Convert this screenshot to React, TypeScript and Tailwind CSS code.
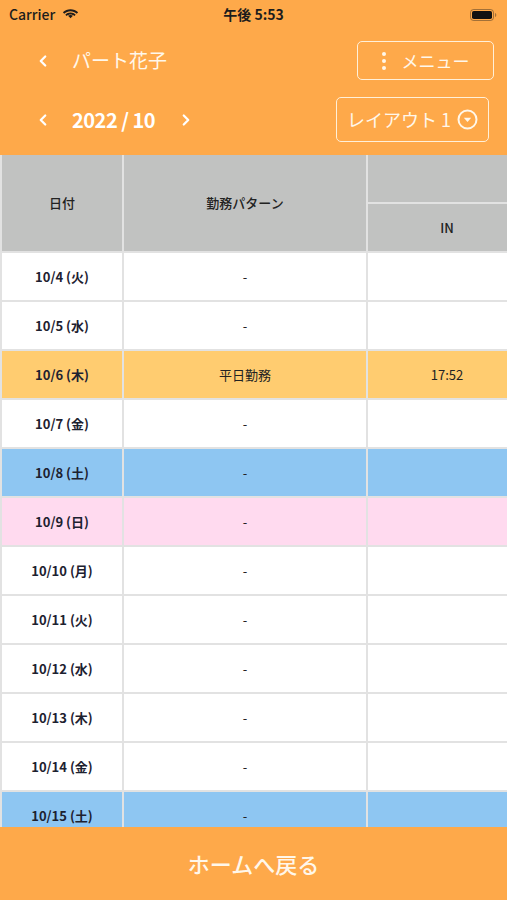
import { ChevronLeft, ChevronRight } from "lucide-react";

type Row = { date: string; pattern: string; inTime: string; tone: "plain" | "work" | "sat" | "sun" };

const rows: Row[] = [
  { date: "10/4 (火)", pattern: "-", inTime: "", tone: "plain" },
  { date: "10/5 (水)", pattern: "-", inTime: "", tone: "plain" },
  { date: "10/6 (木)", pattern: "平日勤務", inTime: "17:52", tone: "work" },
  { date: "10/7 (金)", pattern: "-", inTime: "", tone: "plain" },
  { date: "10/8 (土)", pattern: "-", inTime: "", tone: "sat" },
  { date: "10/9 (日)", pattern: "-", inTime: "", tone: "sun" },
  { date: "10/10 (月)", pattern: "-", inTime: "", tone: "plain" },
  { date: "10/11 (火)", pattern: "-", inTime: "", tone: "plain" },
  { date: "10/12 (水)", pattern: "-", inTime: "", tone: "plain" },
  { date: "10/13 (木)", pattern: "-", inTime: "", tone: "plain" },
  { date: "10/14 (金)", pattern: "-", inTime: "", tone: "plain" },
  { date: "10/15 (土)", pattern: "-", inTime: "", tone: "sat" },
];

const toneBg: Record<Row["tone"], string> = {
  plain: "bg-white",
  work: "bg-[#ffcc70]",
  sat: "bg-[#8ec6f2]",
  sun: "bg-[#ffdaef]",
};

function Wifi() {
  return (
    <svg width="17" height="12" viewBox="0 0 17 12" fill="#1c1c1c">
      <path d="M8.5 2.2c2.4 0 4.6.9 6.3 2.5l1.3-1.4C14.1 1.3 11.4.2 8.5.2S2.9 1.3.9 3.3l1.3 1.4C3.9 3.1 6.1 2.2 8.5 2.2z" />
      <path d="M8.5 5.6c1.5 0 2.8.5 3.9 1.5l1.3-1.4C12.3 4.4 10.5 3.6 8.5 3.6s-3.8.8-5.2 2.1l1.3 1.4c1.1-1 2.4-1.5 3.9-1.5z" />
      <path d="M8.5 9.2l2.4-2.4c-.6-.6-1.5-.9-2.4-.9s-1.8.3-2.4.9z" />
    </svg>
  );
}

function Battery() {
  return (
    <svg width="27" height="12" viewBox="0 0 27 12">
      <rect x="0.5" y="0.5" width="23" height="11" rx="3" fill="none" stroke="#1c1c1c" strokeOpacity="0.4" />
      <rect x="2" y="2" width="20" height="8" rx="1.8" fill="#111" />
      <path d="M25 4v4c.8-.3 1.3-1.1 1.3-2S25.8 4.3 25 4z" fill="#1c1c1c" fillOpacity="0.4" />
    </svg>
  );
}

function CircleDown() {
  return (
    <svg width="21" height="21" viewBox="0 0 21 21" fill="none">
      <circle cx="10.5" cy="10.5" r="9" stroke="#fff7ea" strokeWidth="2" />
      <path d="M6.8 8.8h7.4l-3.7 4.2z" fill="#fff7ea" />
    </svg>
  );
}

export default function App() {
  return (
    <div
      className="flex h-[900px] w-[507px] flex-col overflow-hidden bg-white"
      style={{ fontFamily: '"Noto Sans CJK JP", "Noto Sans", sans-serif' }}
    >
      <header className="h-[155px] shrink-0 bg-[#fea94a]">
        <div className="relative flex h-[27px] items-center px-[9px] pt-[2px]">
          <div className="flex items-center gap-[7px] text-[14px] font-medium text-[#1c1c1c]">
            <span>Carrier</span>
            <Wifi />
          </div>
          <span className="absolute left-1/2 top-[4px] -translate-x-1/2 text-[14px] font-bold text-[#1c1c1c]">
            午後 5:53
          </span>
          <div className="ml-auto pr-[1px]">
            <Battery />
          </div>
        </div>

        <div className="mt-[14px] flex h-[39px] items-center pl-[34px] pr-[13px]">
          <ChevronLeft className="size-[18px] text-white" strokeWidth={3} />
          <span className="ml-[20px] text-[19px] text-[#fff7ea]">パート花子</span>
          <button className="ml-auto flex h-[39px] w-[137px] items-center justify-center gap-[16px] rounded-[5px] border-[1.5px] border-[#fff0d9] text-[17px] text-[#fff7ea]">
            <span className="flex flex-col gap-[3px]">
              <span className="size-[4px] rounded-full bg-[#fff7ea]" />
              <span className="size-[4px] rounded-full bg-[#fff7ea]" />
              <span className="size-[4px] rounded-full bg-[#fff7ea]" />
            </span>
            <span>メニュー</span>
          </button>
        </div>

        <div className="mt-[17px] flex h-[45px] items-center pl-[34px] pr-[18px]">
          <ChevronLeft className="size-[18px] text-white" strokeWidth={3} />
          <span className="ml-[20px] text-[20px] font-bold tracking-tight text-white">2022 / 10</span>
          <ChevronRight className="ml-[22px] size-[18px] text-white" strokeWidth={3} />
          <button className="ml-auto flex h-[45px] w-[153px] items-center justify-center gap-[6px] rounded-[5px] border-[1.5px] border-[#fff0d9] text-[18px] text-[#fff7ea]">
            <span>レイアウト 1</span>
            <CircleDown />
          </button>
        </div>
      </header>

      <div className="min-h-0 flex-1 overflow-hidden bg-[#e2e2e2] pl-[2px]">
        <div className="grid w-[700px] grid-cols-[120px_242px_158px_158px] gap-[2px] text-[13px] text-[#222]">
          <div className="row-span-2 flex h-[96px] items-center justify-center bg-[#c1c2c1] font-medium">日付</div>
          <div className="row-span-2 flex items-center justify-center bg-[#c1c2c1] font-medium">勤務パターン</div>
          <div className="col-span-2 flex h-[47px] items-center justify-center bg-[#c1c2c1] font-medium">出退勤</div>
          <div className="flex h-[47px] items-center justify-center bg-[#c1c2c1] font-medium">IN</div>
          <div className="flex items-center justify-center bg-[#c1c2c1] font-medium">OUT</div>

          {rows.map((r) => (
            <div key={r.date} className="contents">
              <div className={`flex h-[47px] items-center justify-center font-semibold text-[#1d2130] ${toneBg[r.tone]}`}>
                {r.date}
              </div>
              <div className={`flex items-center justify-center ${toneBg[r.tone]}`}>{r.pattern}</div>
              <div className={`flex items-center justify-center ${toneBg[r.tone]}`}>{r.inTime}</div>
              <div className={`flex items-center justify-center ${toneBg[r.tone]}`} />
            </div>
          ))}
        </div>
      </div>

      <button className="flex h-[73px] shrink-0 items-center justify-center bg-[#fea94a] text-[22px] font-medium text-[#fff7ea]">
        ホームへ戻る
      </button>
    </div>
  );
}
